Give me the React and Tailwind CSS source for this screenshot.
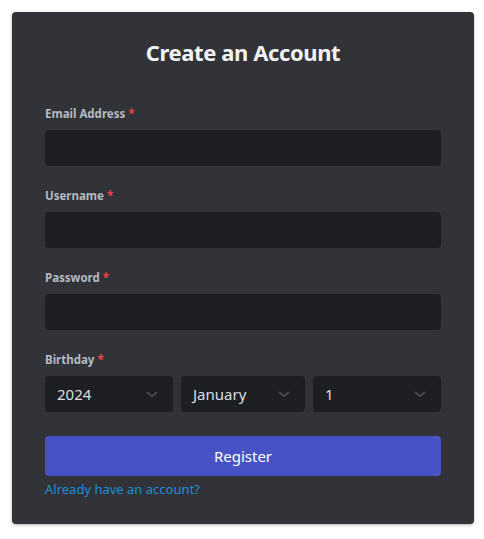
import React from "react";

function Chevron() {
  return (
    <svg width="14" height="14" viewBox="0 0 24 24" fill="none" stroke="#5c5e66" strokeWidth="2" strokeLinecap="round" strokeLinejoin="round">
      <path d="M4 9l8 7 8-7" />
    </svg>
  );
}

function Label({ children }) {
  return (
    <label className="block text-[11.5px] leading-[16px] font-bold text-[#b5bac1] mb-2">
      {children} <span className="text-[#f23f42]">*</span>
    </label>
  );
}

function Select({ value, w }) {
  return (
    <div className={`${w} h-9 rounded bg-[#1e1f22] flex items-center justify-between pl-3 pr-[14px] text-[15px] text-[#dbdee1]`}>
      <span>{value}</span>
      <Chevron />
    </div>
  );
}

export default function App() {
  return (
    <div className="bg-white w-[484px] h-[539px] p-3" style={{ fontFamily: '"Noto Sans", "Open Sans", sans-serif' }}>
      <div className="w-[462px] h-[512px] bg-[#313338] rounded px-[33px] pt-[25px] shadow-[0_1px_3px_rgba(0,0,0,0.3)]">
        <h1 className="text-center text-[22px] leading-[30px] font-bold tracking-[-0.4px] text-[#f2f3f5]">Create an Account</h1>
        <div className="mt-[39px]">
          <Label>Email Address</Label>
          <div className="h-9 rounded bg-[#1e1f22]" />
        </div>
        <div className="mt-[22px]">
          <Label>Username</Label>
          <div className="h-9 rounded bg-[#1e1f22]" />
        </div>
        <div className="mt-[22px]">
          <Label>Password</Label>
          <div className="h-9 rounded bg-[#1e1f22]" />
        </div>
        <div className="mt-[22px]">
          <Label>Birthday</Label>
          <div className="flex gap-2">
            <Select value="2024" w="w-[128px]" />
            <Select value="January" w="w-[124px]" />
            <Select value="1" w="flex-1" />
          </div>
        </div>
        <button className="mt-6 w-full h-10 rounded bg-[#4752c4] text-white text-[15px]">Register</button>
        <div className="mt-1 text-[13px] leading-[18px] text-[#1a8fd8]">Already have an account?</div>
      </div>
    </div>
  );
}
